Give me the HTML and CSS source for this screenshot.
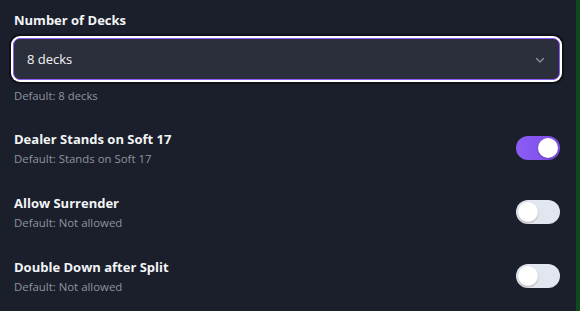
FILE: index.html
```html
<!DOCTYPE html>
<html>
<head>
<meta charset="utf-8">
<link rel="stylesheet" href="styles.css">
</head>
<body>
<div class="frame">
  <div class="panel">
    <div class="field">
      <div class="label">Number of Decks</div>
      <div class="select">
        <span>8 decks</span>
        <svg class="chev" width="12" height="12" viewBox="0 0 12 12"><path d="M2.5 4.5 L6 8 L9.5 4.5" fill="none" stroke="#8b909c" stroke-width="1.3" stroke-linecap="round" stroke-linejoin="round"/></svg>
      </div>
      <div class="hint">Default: 8 decks</div>
    </div>
    <div class="row">
      <div class="text">
        <div class="title">Dealer Stands on Soft 17</div>
        <div class="sub">Default: Stands on Soft 17</div>
      </div>
      <div class="toggle on"><div class="knob"></div></div>
    </div>
    <div class="row">
      <div class="text">
        <div class="title">Allow Surrender</div>
        <div class="sub">Default: Not allowed</div>
      </div>
      <div class="toggle"><div class="knob"></div></div>
    </div>
    <div class="row">
      <div class="text">
        <div class="title">Double Down after Split</div>
        <div class="sub">Default: Not allowed</div>
      </div>
      <div class="toggle"><div class="knob"></div></div>
    </div>
  </div>
  <div class="edge"></div>
</div>
</body>
</html>
```
FILE: styles.css
```css
html, body {
  margin: 0;
  padding: 0;
  background: #1a1f2b;
}
.frame {
  display: flex;
  width: 580px;
  height: 311px;
  overflow: hidden;
  font-family: "Open Sans", "Noto Sans", sans-serif;
}
.panel {
  flex: 1;
  padding: 10px 16px 0 14px;
  box-sizing: border-box;
}
.edge {
  width: 4px;
  background: #0f4a1c;
}
.label {
  font-size: 13px;
  font-weight: 700;
  color: #f3f4f6;
  line-height: 20px;
  margin-bottom: 8px;
}
.select {
  margin-left: -1px;
  height: 40px;
  border-radius: 7px;
  background: #2b2f3b;
  border: 1px solid #8b5cf6;
  box-shadow: 0 0 0 2px #ffffff, 0 0 0 4px #0e1118;
  display: flex;
  align-items: center;
  justify-content: space-between;
  padding: 0 13px 0 13px;
  color: #f3f4f6;
  font-size: 13px;
}
.chev { margin-top: 1px; }
.hint {
  margin-top: 9px;
  font-size: 11.3px;
  color: #8f949e;
  line-height: 14px;
}
.row {
  display: flex;
  align-items: center;
  justify-content: space-between;
  height: 40px;
}
.field + .row { margin-top: 25px; }
.row + .row { margin-top: 24px; }
.title {
  font-size: 13px;
  font-weight: 700;
  color: #f3f4f6;
  line-height: 18px;
}
.sub {
  margin-top: 3px;
  font-size: 11.4px;
  color: #8f949e;
  line-height: 16px;
}
.toggle {
  width: 44px;
  height: 24px;
  border-radius: 12px;
  background: #e2e6ee;
  display: flex;
  align-items: center;
  padding: 0 2px;
  box-sizing: border-box;
}
.toggle.on {
  background: linear-gradient(90deg, #8b5cf6, #7c4fe8);
  justify-content: flex-end;
}
.knob {
  width: 20px;
  height: 20px;
  border-radius: 50%;
  background: #ffffff;
  box-shadow: 0 1px 2px rgba(0,0,0,0.25);
}
```
